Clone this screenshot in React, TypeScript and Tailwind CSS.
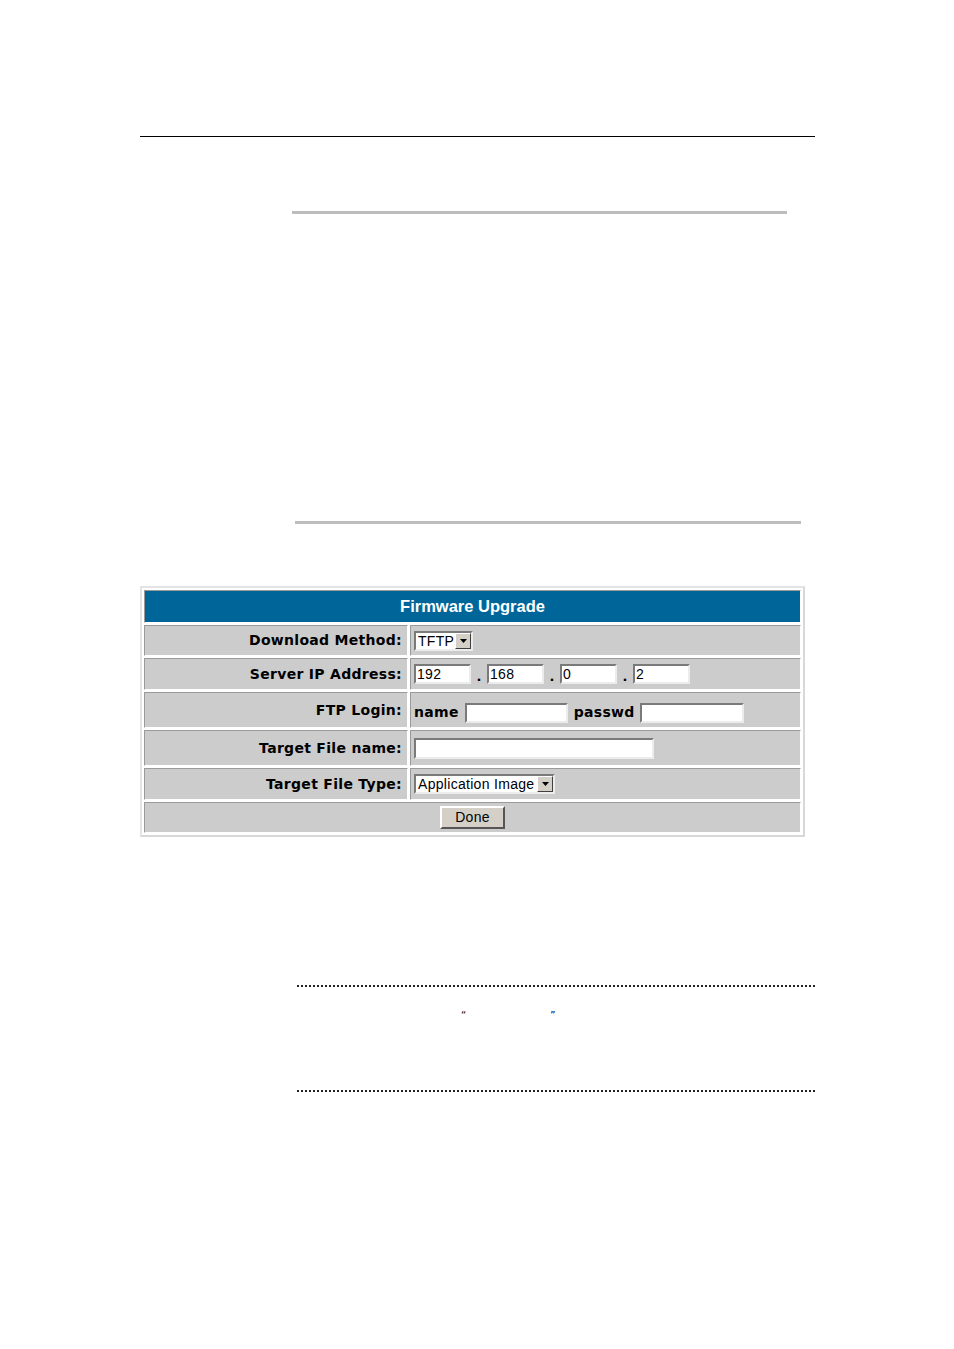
import React from 'react';

const labelFont = "font-['DejaVu_Sans',Verdana,sans-serif] tracking-[0.3px]";
const inputFont = "font-['Liberation_Sans',Arial,sans-serif] tracking-[0.3px]";

function Arrow() {
  return (
    <span className="flex h-full w-[16px] items-center justify-center border border-t-white border-l-white border-r-[#404040] border-b-[#404040] bg-[#d4d0c8]">
      <svg width="7" height="4" viewBox="0 0 7 4">
        <path d="M0 0 L7 0 L3.5 4 Z" fill="#000" />
      </svg>
    </span>
  );
}

function Select({ value, width }: { value: string; width: string }) {
  return (
    <div className={`flex h-[20px] ${width} items-center border-2 border-t-[#7a7a7a] border-l-[#7a7a7a] border-b-[#ececec] border-r-[#ececec] bg-white`}>
      <span className={`flex-1 pl-[2px] text-[14px] leading-none text-black ${inputFont}`}>{value}</span>
      <Arrow />
    </div>
  );
}

function TextBox({ value, width, height = 'h-[20px]' }: { value?: string; width: string; height?: string }) {
  return (
    <div className={`${width} ${height} flex items-center border-2 border-t-[#7a7a7a] border-l-[#7a7a7a] border-b-[#ececec] border-r-[#ececec] bg-white pl-[1px] text-[14px] leading-none text-black ${inputFont}`}>
      {value}
    </div>
  );
}

const cell = 'border border-t-[#9a9a9a] border-l-[#9a9a9a] border-b-white border-r-white bg-[#cccccc] p-0 align-middle';

function Row({ label, h, children }: { label: string; h: string; children: React.ReactNode }) {
  return (
    <tr className={h}>
      <td className={`${cell} w-[264px] pr-[5px] text-right text-[14px] font-bold text-black ${labelFont}`}>{label}</td>
      <td className={`${cell} pl-[3px]`}>{children}</td>
    </tr>
  );
}

function Dot() {
  return <span className="w-[16px] self-end pb-[1px] text-center font-['DejaVu_Sans',Verdana,sans-serif] text-[13px] font-bold leading-none">.</span>;
}

export default function App() {
  return (
    <div className="h-[1349px] w-[954px] bg-white">
      <div className="flex flex-col pt-[136px]">
        <div className="ml-[140px] h-px w-[675px] bg-black" />
        <div className="ml-[292px] mt-[74px] h-[3px] w-[495px] bg-[#bdbdbd]" />
        <div className="ml-[295px] mt-[307px] h-[3px] w-[506px] bg-[#bdbdbd]" />

        <div className="ml-[140px] mt-[62px]">
          <table className="w-[665px] border-separate border-spacing-[2px] border-2 border-t-[#e4e4e4] border-l-[#e4e4e4] border-b-[#d8d8d8] border-r-[#d8d8d8]">
            <tbody>
              <tr className="h-[33px]">
                <td colSpan={2} className="border border-t-[#9a9a9a] border-l-[#9a9a9a] border-b-white border-r-white bg-[#006699] p-0 text-center align-middle">
                  <span className="font-['Liberation_Sans',Arial,sans-serif] text-[16.5px] font-bold text-white">Firmware Upgrade</span>
                </td>
              </tr>
              <Row label="Download Method:" h="h-[31px]">
                <Select value="TFTP" width="w-[59px]" />
              </Row>
              <Row label="Server IP Address:" h="h-[32px]">
                <div className="flex items-center">
                  <TextBox value="192" width="w-[57px]" />
                  <Dot />
                  <TextBox value="168" width="w-[57px]" />
                  <Dot />
                  <TextBox value="0" width="w-[57px]" />
                  <Dot />
                  <TextBox value="2" width="w-[57px]" />
                </div>
              </Row>
              <Row label="FTP Login:" h="h-[36px]">
                <div className={`flex items-center pt-[5px] text-[14px] font-bold text-black ${labelFont}`}>
                  <span className="self-end">name</span>
                  <span className="ml-[6px]"><TextBox width="w-[103px]" /></span>
                  <span className="ml-[6px] self-end">passwd</span>
                  <span className="ml-[5px]"><TextBox width="w-[104px]" /></span>
                </div>
              </Row>
              <Row label="Target File name:" h="h-[36px]">
                <TextBox width="w-[240px]" height="h-[21px]" />
              </Row>
              <Row label="Target File Type:" h="h-[32px]">
                <Select value="Application Image" width="w-[141px]" />
              </Row>
              <tr className="h-[31px]">
                <td colSpan={2} className={`${cell} text-center`}>
                  <button className={`mx-auto flex h-[23px] w-[65px] items-center justify-center border-2 border-t-white border-l-white border-b-[#555] border-r-[#555] bg-[#d4d0c8] text-[14px] text-black ${inputFont}`}>
                    Done
                  </button>
                </td>
              </tr>
            </tbody>
          </table>
        </div>

        <div className="ml-[297px] mt-[148px] w-[518px] border-t-2 border-dotted border-[#222]" />
        <div className="ml-[461px] mt-[24px] flex h-[10px] font-['DejaVu_Sans',sans-serif] text-[10px] leading-none text-black">
          <span>“</span>
          <span className="ml-[84px]">”</span>
        </div>
        <div className="ml-[297px] mt-[69px] w-[518px] border-t-2 border-dotted border-[#222]" />
      </div>
    </div>
  );
}
